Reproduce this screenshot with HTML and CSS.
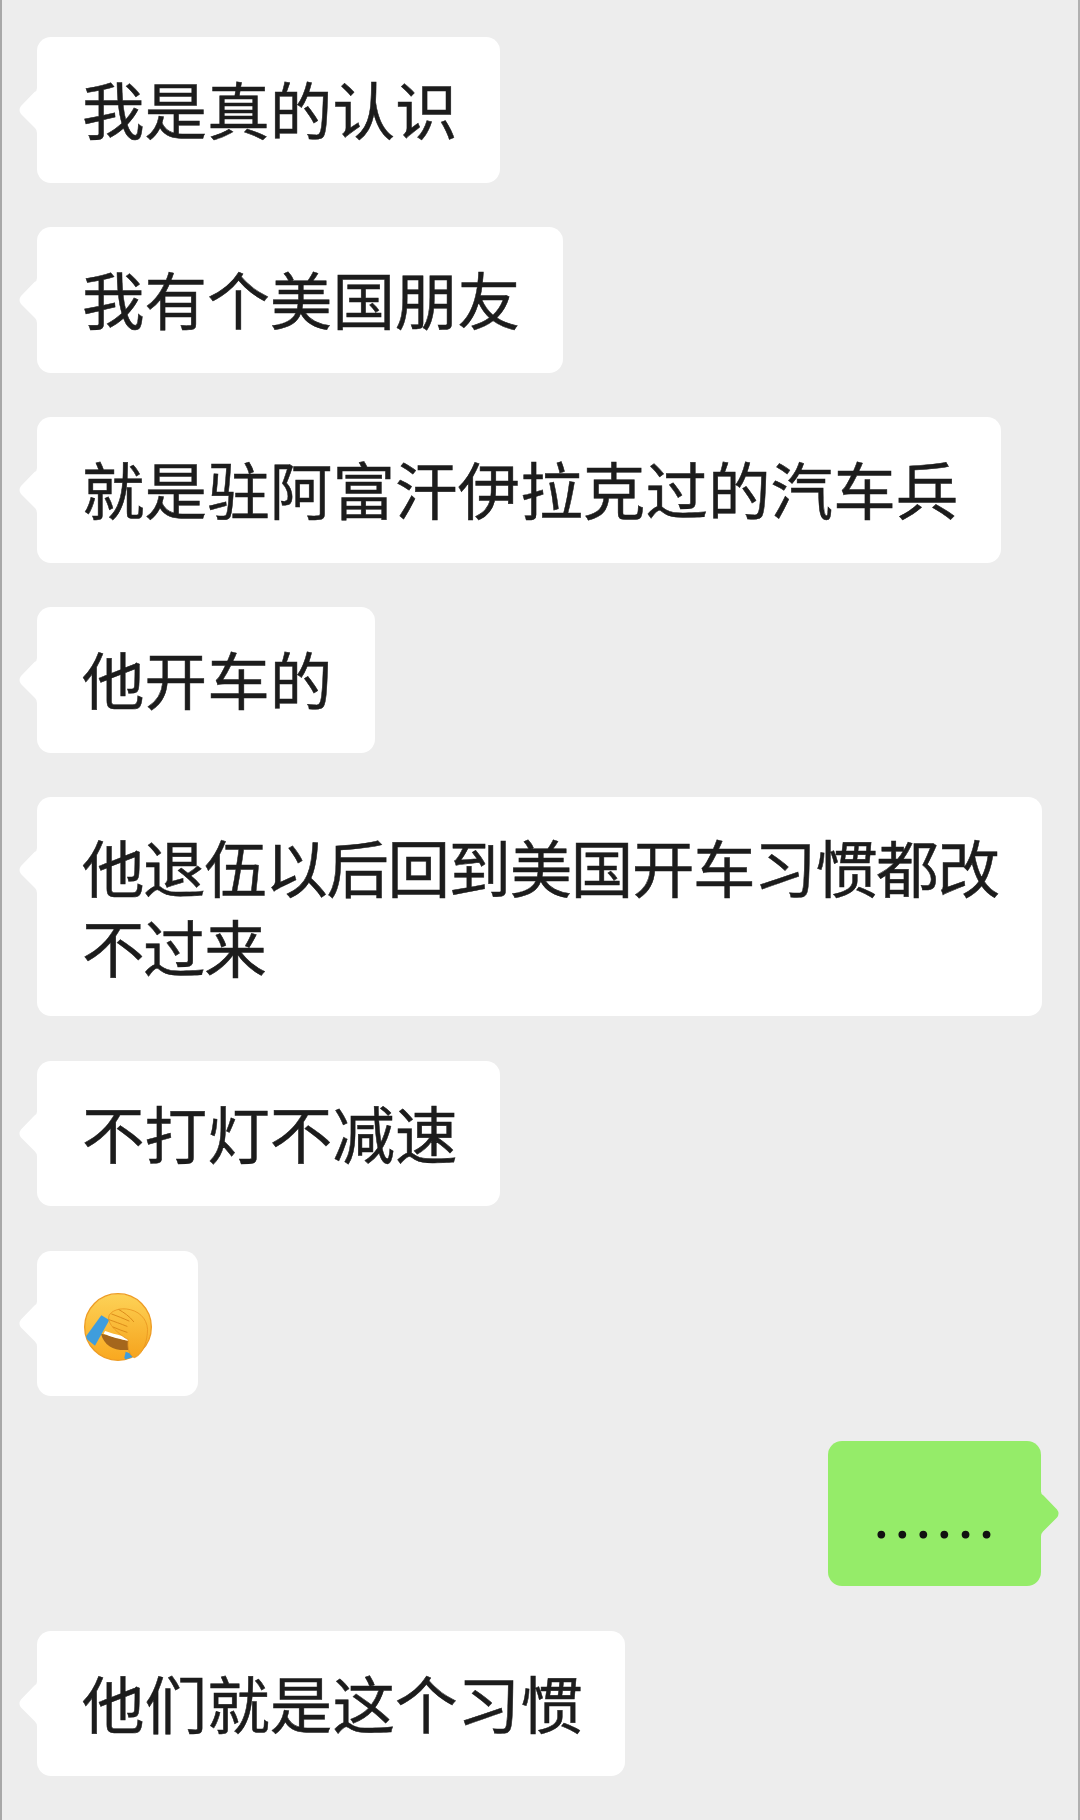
FILE: index.html
```html
<!DOCTYPE html>
<html lang="zh-CN">
<head>
<meta charset="utf-8">
<title>聊天</title>
<link rel="stylesheet" href="styles.css">
</head>
<body>
<main class="chat">
  <div class="row"><div class="bubble">我是真的认识</div></div>
  <div class="row"><div class="bubble">我有个美国朋友</div></div>
  <div class="row"><div class="bubble">就是驻阿富汗伊拉克过的汽车兵</div></div>
  <div class="row"><div class="bubble">他开车的</div></div>
  <div class="row"><div class="bubble bubble-wide">他退伍以后回到美国开车习惯都改不过来</div></div>
  <div class="row"><div class="bubble">不打灯不减速</div></div>
  <div class="row">
    <div class="bubble bubble-emoji">
      <svg class="emoji" viewBox="40 35 210 210" role="img" aria-label="捂脸">
        <defs>
          <linearGradient id="face" x1="0" y1="0" x2="0" y2="1">
            <stop offset="0" stop-color="#fdd257"/>
            <stop offset="1" stop-color="#f9a81f"/>
          </linearGradient>
          <linearGradient id="hand" x1="0" y1="0" x2="0" y2="1">
            <stop offset="0" stop-color="#fbc545"/>
            <stop offset="1" stop-color="#f6a41e"/>
          </linearGradient>
          <clipPath id="round"><circle cx="145" cy="140" r="100"/></clipPath>
        </defs>
        <circle cx="145" cy="140" r="100" fill="url(#face)" stroke="#ee9c24" stroke-width="4"/>
        <g clip-path="url(#round)">
          <path d="M94 160 C120 165 150 175 184 184 L182 208 C140 214 104 200 94 160Z" fill="#a5661c"/>
          <path d="M106 152 C125 158 155 168 186 172 L184 182 C150 177 124 169 102 160Z" fill="#fff"/>
          <path d="M95 105 L119 119 L76 196 L46 172Z" fill="#3f9ddd"/>
          <path d="M168 214 L200 226 L172 246 L164 232Z" fill="#3f9ddd"/>
        </g>
        <path d="M118 106 C124 92 150 80 182 88 C216 96 238 125 233 160 C230 195 214 226 194 232 C180 226 172 205 176 178 C160 170 135 150 125 135 C118 125 115 115 118 106Z" fill="url(#hand)" stroke="#e8951f" stroke-width="2.5"/>
        <path d="M126 101 C145 108 160 114 178 122 M118 118 C135 124 152 130 172 138 M130 140 C145 146 158 152 172 156 M148 88 C162 96 180 108 192 124" fill="none" stroke="#dc8c1a" stroke-width="3" stroke-linecap="round"/>
      </svg>
    </div>
  </div>
  <div class="row row-out"><div class="bubble bubble-out"><span class="dots">......</span></div></div>
  <div class="row"><div class="bubble">他们就是这个习惯</div></div>
</main>
</body>
</html>
```

FILE: styles.css
```css
* {
  box-sizing: border-box;
}

html,
body {
  margin: 0;
  padding: 0;
}

body {
  width: 1080px;
  height: 1820px;
  overflow: hidden;
  background: #ededed;
  font-family: "Noto Sans CJK SC", "Noto Sans", sans-serif;
}

.chat {
  display: flex;
  flex-direction: column;
  gap: 44.5px;
  height: 1820px;
  padding: 37px 36px 0 35px;
  border-left: 2px solid #a8a8a8;
  border-right: 2px solid #b0b0b0;
}

.row {
  display: flex;
}

.row-out {
  justify-content: flex-end;
}

.bubble {
  position: relative;
  min-height: 145.5px;
  padding: 31px 42.4px 34.5px 45px;
  border-radius: 14px;
  background: #fff;
  color: #1c1c1c;
  font-size: 62.5px;
  letter-spacing: 0.1px;
  -webkit-text-stroke: 0.5px #1c1c1c;
  line-height: 80px;
}

.bubble::before {
  content: "";
  position: absolute;
  top: 49px;
  left: -20px;
  width: 22px;
  height: 50px;
  background: inherit;
  clip-path: path("M22 0 L20 2 Q20 5 17.5 6 L4 20 Q1 24 4 28 L18 42 Q20 44 20 47 L22 50 Z");
}

.bubble-wide {
  width: 1005px;
  padding: 28.5px 40px 30.5px 45px;
  letter-spacing: -1.4px;
}

.bubble-emoji {
  width: 161px;
}

.emoji {
  display: block;
  position: absolute;
  top: 41.5px;
  left: 46px;
  width: 70px;
  height: 70px;
}

.bubble-out {
  width: 213px;
  margin-right: 1px;
  padding: 33.5px 0 0 46px;
  background: #95ec69;
}

.bubble-out::before {
  left: auto;
  right: -20px;
  transform: scaleX(-1);
}

.dots {
  display: block;
  font-family: "Lato", "Noto Sans CJK SC", sans-serif;
  font-size: 62px;
  letter-spacing: 6.4px;
  -webkit-text-stroke: 0;
  line-height: 80px;
  color: #111;
}
```
